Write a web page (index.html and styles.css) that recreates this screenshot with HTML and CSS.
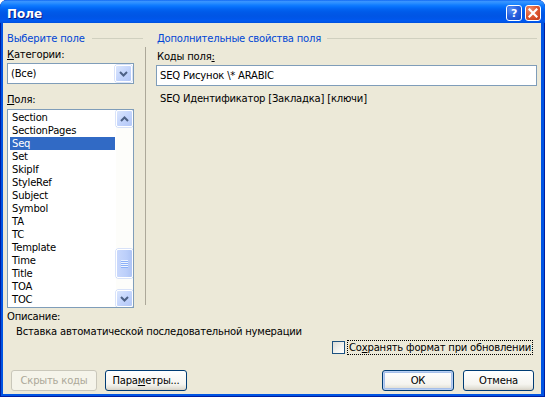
FILE: index.html
```html
<!DOCTYPE html>
<html lang="ru">
<head>
    <meta charset="UTF-8">
    <title>Поле</title>
    <link rel="stylesheet" href="styles.css">
</head>
<body>
    <div class="window">
        <div class="titlebar">
            <span class="title">Поле</span>
            <div class="caption-buttons">
                <span class="cap cap-help">?</span>
                <span class="cap cap-close">
                    <svg width="10" height="10" viewBox="0 0 10 10"><path d="M1.5 1.5 L8.5 8.5 M8.5 1.5 L1.5 8.5" stroke="#fff" stroke-width="2.2" stroke-linecap="square"/></svg>
                </span>
            </div>
        </div>

        <div class="client">
            <div class="panes">
                <!-- Left: field picker -->
                <div class="pane-left">
                    <div class="group-title"><span>Выберите поле</span><i class="rule"></i></div>
                    <div class="label label-first"><u>К</u>атегории:</div>
                    <div class="combo">
                        <span class="combo-value">(Все)</span>
                        <span class="sb-btn drop-btn">
                            <svg width="9" height="6" viewBox="0 0 9 6"><path d="M1 1 L4.5 4.5 L8 1" fill="none" stroke="#4d6185" stroke-width="2"/></svg>
                        </span>
                    </div>
                    <div class="label label-list"><u>П</u>оля:</div>
                    <div class="listbox">
                        <ul class="items">
                            <li>Section</li>
                            <li>SectionPages</li>
                            <li class="selected">Seq</li>
                            <li>Set</li>
                            <li>SkipIf</li>
                            <li>StyleRef</li>
                            <li>Subject</li>
                            <li>Symbol</li>
                            <li>TA</li>
                            <li>TC</li>
                            <li>Template</li>
                            <li>Time</li>
                            <li>Title</li>
                            <li>TOA</li>
                            <li>TOC</li>
                        </ul>
                        <div class="vscroll">
                            <span class="sb-btn">
                                <svg width="9" height="6" viewBox="0 0 9 6"><path d="M1 5 L4.5 1.5 L8 5" fill="none" stroke="#4d6185" stroke-width="2"/></svg>
                            </span>
                            <div class="track">
                                <span class="thumb"><i></i><i></i><i></i><i></i></span>
                            </div>
                            <span class="sb-btn">
                                <svg width="9" height="6" viewBox="0 0 9 6"><path d="M1 1 L4.5 4.5 L8 1" fill="none" stroke="#4d6185" stroke-width="2"/></svg>
                            </span>
                        </div>
                    </div>
                </div>

                <!-- Right: field properties -->
                <div class="pane-right">
                    <div class="group-title group-title-right"><span>Дополнительные свойства поля</span><i class="rule"></i></div>
                    <div class="pane-body">
                        <div class="label label-first">Коды поля<u>:</u></div>
                        <div class="textbox">SEQ Рисунок \* ARABIC</div>
                        <div class="syntax">SEQ Идентификатор [Закладка] [ключи]</div>
                    </div>
                </div>
            </div>

            <div class="desc-label">Описание:</div>
            <div class="desc">Вставка автоматической последовательной нумерации</div>

            <div class="check-row">
                <span class="checkbox"></span>
                <span class="check-label">Со<u>х</u>ранять формат при обновлении</span>
            </div>

            <div class="buttons">
                <div class="btn-group">
                    <button class="btn btn-hide" disabled>Скрыть коды</button>
                    <button class="btn btn-params">Пара<u>м</u>етры...</button>
                </div>
                <div class="btn-group btn-group-right">
                    <button class="btn btn-ok btn-default">ОК</button>
                    <button class="btn btn-cancel">Отмена</button>
                </div>
            </div>
        </div>
    </div>
</body>
</html>
```

FILE: styles.css
```css
body {
    margin: 0;
    background: #fff;
    font-family: "DejaVu Sans", sans-serif;
    font-size: 10px;
    letter-spacing: -0.2px;
    color: #000;
}
u {
    text-decoration: underline;
    text-underline-offset: 1px;
}
.window {
    width: 545px;
    height: 397px;
    box-sizing: border-box;
    display: flex;
    flex-direction: column;
    background: #0054e3;
    border-radius: 7px 7px 0 0;
    overflow: hidden;
    padding: 0 4px 3px 3px;
    box-shadow: inset 1px 0 0 #001ea0, inset -1px 0 0 #001ea0, inset 0 -1px 0 #001ea0;
}
.titlebar {
    height: 23px;
    margin: 0 -4px 0 -3px;
    padding: 0 4px 0 7px;
    display: flex;
    justify-content: space-between;
    background: linear-gradient(to bottom, #0058ee 0, #3d95ff 1px, #2b8fff 3px, #127dff 5px, #0670fb 7px, #0264f2 9px, #005ae9 12px, #0055e5 16px, #0056ea 19px, #005af2 21px, #0050dc 23px);
}
.title {
    padding-top: 7px;
    font-weight: bold;
    font-size: 12px;
    line-height: 14px;
    letter-spacing: 0;
    color: #fff;
    text-shadow: 1px 1px 0 #0a1883;
}
.caption-buttons {
    display: flex;
    gap: 3px;
    padding-top: 5px;
}
.cap {
    width: 16px;
    height: 16px;
    box-sizing: border-box;
    border: 1px solid #fff;
    border-radius: 3px;
    display: flex;
    align-items: center;
    justify-content: center;
    color: #fff;
    font-weight: bold;
    font-size: 11px;
}
.cap-help {
    background: radial-gradient(circle at 30% 25%, #5a8ff5 0, #2a63e0 45%, #1546c8 100%);
}
.cap-close {
    background: radial-gradient(circle at 30% 25%, #f08d6c 0, #df5a33 45%, #c53a1a 100%);
}

.client {
    flex: 1;
    background: #ece9d8;
    padding: 9px 4px 3px 4px;
    display: flex;
    flex-direction: column;
}
.panes {
    display: flex;
    height: 276px;
}
.group-title {
    display: flex;
    align-items: center;
    gap: 7px;
    line-height: 13px;
    color: #0046d5;
}
.rule {
    flex: 1;
    height: 0;
    border-top: 1px solid #d0d0bf;
}
.label {
    line-height: 13px;
}
.label-first {
    margin-top: 3px;
}
.label-list {
    margin-top: 9px;
}

/* left pane */
.pane-left {
    width: 136px;
    display: flex;
    flex-direction: column;
}
.combo {
    margin-top: 2px;
    width: 127px;
    height: 21px;
    box-sizing: border-box;
    border: 1px solid #7f9db9;
    background: #fff;
    display: flex;
    align-items: center;
    justify-content: space-between;
    padding: 0 1px 0 3px;
}
.combo-value {
    line-height: 13px;
}
.drop-btn {
    height: 19px;
}
.sb-btn {
    width: 17px;
    height: 17px;
    box-sizing: border-box;
    border: 1px solid #fff;
    border-radius: 2px;
    background: linear-gradient(135deg, #dbe6fd 0, #c4d5fc 50%, #b3c7f7 100%);
    box-shadow: 0 0 0 0.5px #b4c8f6;
    display: flex;
    align-items: center;
    justify-content: center;
}
.listbox {
    margin-top: 3px;
    width: 127px;
    height: 199px;
    box-sizing: border-box;
    border: 1px solid #7f9db9;
    background: #fff;
    display: flex;
    overflow: hidden;
}
.items {
    list-style: none;
    margin: 0;
    padding: 1px 1px 0 2px;
    flex: 1;
}
.items li {
    line-height: 13px;
    padding-left: 2px;
    white-space: nowrap;
}
.items li.selected {
    background: #316ac5;
    color: #fff;
}
.vscroll {
    width: 17px;
    display: flex;
    flex-direction: column;
    background: #fdfdfa;
}
.track {
    flex: 1;
}
.thumb {
    margin: 122px 0 0 0;
    height: 29px;
    box-sizing: border-box;
    border: 1px solid #fff;
    border-radius: 2px;
    background: linear-gradient(to right, #c9d8fc 0, #bccffa 60%, #aec4f5 100%);
    box-shadow: 0 0 0 0.5px #b4c8f6;
    display: flex;
    flex-direction: column;
    align-items: center;
    justify-content: center;
    gap: 1px;
}
.thumb i {
    width: 7px;
    height: 1px;
    background: #eef4fe;
    box-shadow: 0 1px 0 #8cb0f8;
}

/* right pane */
.pane-right {
    flex: 1;
    display: flex;
    flex-direction: column;
    margin-left: 2px;
}
.group-title-right {
    padding-left: 12px;
    gap: 6px;
}
.pane-body {
    margin-top: 2px;
    height: 258px;
    border-left: 1px solid #aca899;
    padding-left: 11px;
}
.textbox {
    margin: 2px 0 0 -1px;
    height: 21px;
    box-sizing: border-box;
    border: 1px solid #7f9db9;
    background: #fff;
    padding: 0 3px;
    line-height: 19px;
}
.syntax {
    margin-top: 6px;
    padding-left: 3px;
    line-height: 13px;
}

/* bottom */
.desc-label {
    margin-top: 2px;
    line-height: 13px;
}
.desc {
    margin-top: 2px;
    padding-left: 9px;
    line-height: 13px;
}
.check-row {
    margin-top: 2px;
    display: flex;
    justify-content: flex-end;
    align-items: center;
    gap: 2px;
    padding-right: 4px;
}
.checkbox {
    width: 13px;
    height: 13px;
    box-sizing: border-box;
    border: 1px solid #1c5180;
    background: linear-gradient(135deg, #dcdcd7 0, #f4f4f0 60%, #fff 100%);
}
.check-label {
    border: 1px dotted #000;
    padding: 0 1px;
    line-height: 13px;
}
.buttons {
    margin-top: 15px;
    display: flex;
    justify-content: space-between;
}
.btn-group {
    display: flex;
    gap: 8px;
    padding-left: 4px;
}
.btn-group-right {
    gap: 9px;
    padding: 0 3px 0 0;
}
.btn {
    height: 21px;
    box-sizing: border-box;
    border: 1px solid #003c74;
    border-radius: 3px;
    background: linear-gradient(to bottom, #fff 0, #f5f4ef 70%, #e3e1d7 90%, #d6d0c5 100%);
    font-family: inherit;
    font-size: 10px;
    letter-spacing: -0.2px;
    color: #000;
    padding: 0;
}
.btn:disabled {
    border-color: #c9c7ba;
    background: #f5f4ea;
    color: #aca899;
}
.btn-default {
    box-shadow: inset 0 0 0 1px #b9d0f4, inset 0 0 0 2px #a6bfe9;
}
.btn-hide {
    width: 86px;
}
.btn-params {
    width: 82px;
}
.btn-ok {
    width: 72px;
}
.btn-cancel {
    width: 71px;
}
```
